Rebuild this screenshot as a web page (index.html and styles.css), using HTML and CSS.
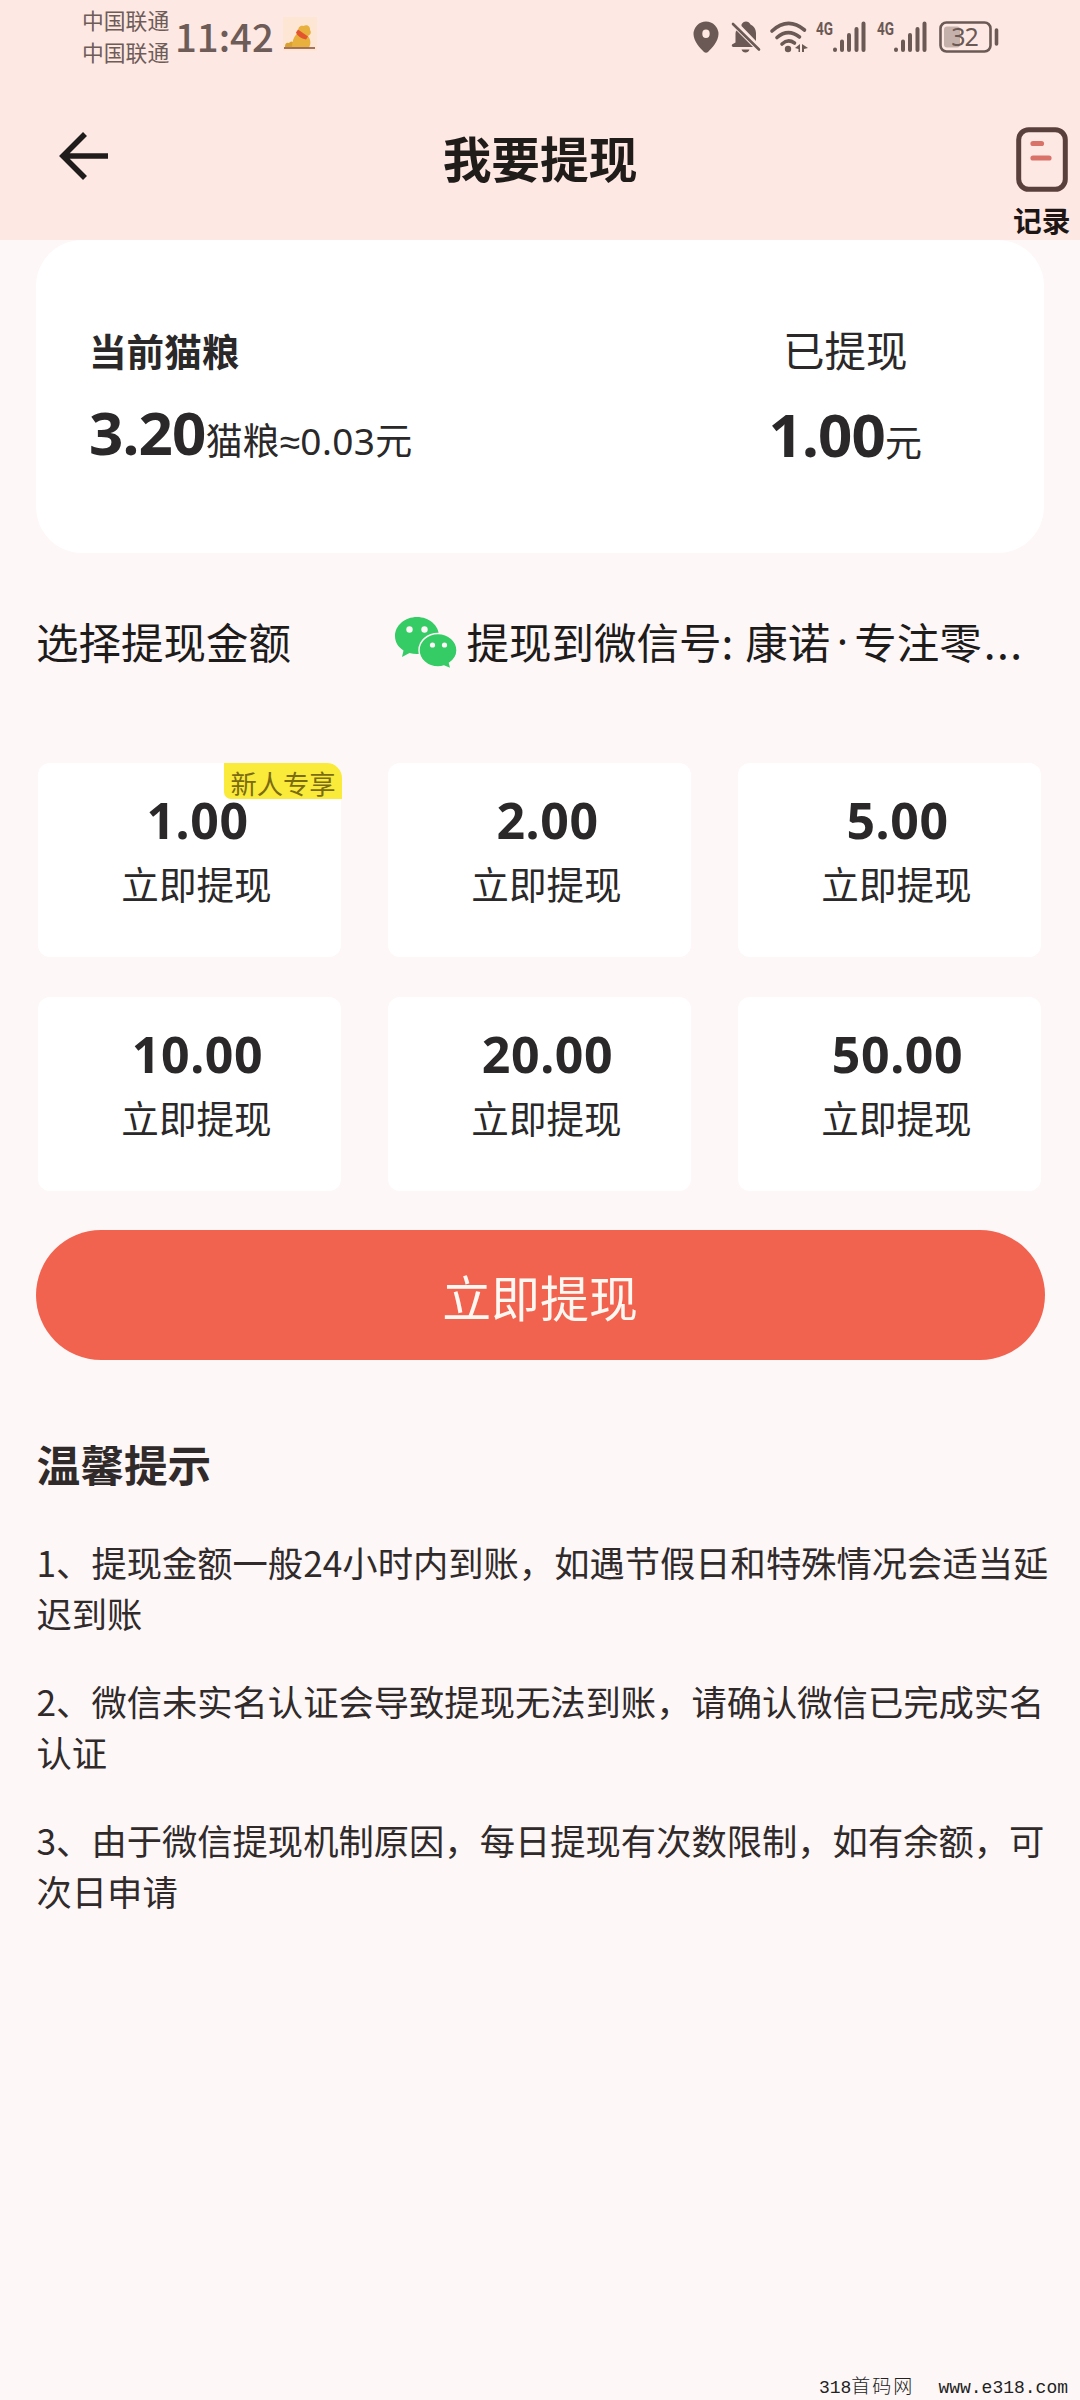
FILE: index.html
```html
<!DOCTYPE html>
<html lang="zh-CN">
<head>
<meta charset="utf-8">
<title>我要提现</title>
<link rel="stylesheet" href="styles.css">
</head>
<body>
<div class="page">
  <header class="header">
    <div class="status">
      <div class="carriers"><span>中国联通</span><span>中国联通</span></div>
      <span class="clock">11:42</span>
      <svg class="app-thumb" width="34" height="34" viewBox="0 0 34 34">
        <rect width="34" height="34" fill="#fde6d4"/>
        <path d="M2 30q0-5 4-4 2-3 5 0l1 4z" fill="#d9a12e"/>
        <path d="M9 30.500C9 23 12 18 15.500 15c-1-5 2-7 5-6 3-2 7 0 6.500 4 2 3 0 5-2 6 3 4 3 8 1 11.500z" fill="#e8b03c"/>
        <path d="M15 12.500l10 7-2 3c-5-1-9-4-10-7z" fill="#e2552e"/>
        <path d="M1 31h31" stroke="#8f5540" stroke-width="1.600"/>
      </svg>
      <div class="status-icons">
        <svg class="pin" width="26" height="32" viewBox="0 0 26 32"><path fill-rule="evenodd" d="M13 0.5A12.5 12.5 0 0 0 .5 13C.5 20 7 27 11 31q2 1.600 4 0C19 27 25.500 20 25.500 13A12.500 12.500 0 0 0 13 .5zM13 8.500a3.700 4.200 0 1 1 0 8.400a3.700 4.200 0 1 1 0-8.400z"/></svg>
        <svg class="bell" width="30" height="32" viewBox="0 0 30 32">
          <path d="M10.500 3.500C11.500 1.500 13 .5 15 .5s3.500 1 4.500 3c3.500 1.500 5.500 5 5.500 9v7.500L10.500 5zM5.500 9.500L22 26H2q-2-1-1-2.500l3.500-2v-9q0-2 1-3zM10.500 28.500h8q-1 3-4 3t-4-3z"/>
          <path class="line" d="M2 3L28 28.500" stroke-width="2.600"/>
        </svg>
        <svg class="wifi" width="38" height="32" viewBox="0 0 38 32">
          <g class="line" stroke-width="3.600"><path d="M2 10Q18 -4.500 34.500 9"/><path d="M7 16.500Q18 7 29.500 16"/><path d="M12 23Q18 17.500 24.500 22"/></g>
          <circle cx="18" cy="28" r="3.200"/><path d="M25 27l5-4v8h-1.500v-3zM32 23l6 4-4 1v3h-2z"/>
        </svg>
        <svg class="signal" width="50" height="32" viewBox="0 0 50 32">
          <text class="net" x="0" y="14" textLength="17" lengthAdjust="spacingAndGlyphs">4G</text>
          <g class="line" stroke-width="4"><path d="M19 28.500v.5M26 20.500v8.500M33 14v15M40.500 8v21M47.500 2.500v26.500"/></g>
        </svg>
        <svg class="signal second" width="50" height="32" viewBox="0 0 50 32">
          <text class="net" x="0" y="14" textLength="17" lengthAdjust="spacingAndGlyphs">4G</text>
          <g class="line" stroke-width="4"><path d="M19 28.500v.5M26 20.500v8.500M33 14v15M40.500 8v21M47.500 2.500v26.500"/></g>
        </svg>
        <svg class="battery" width="60" height="32" viewBox="0 0 60 32">
          <rect x="1.500" y="1.500" width="50" height="29" rx="6" class="line" stroke-width="2.600"/>
          <rect x="5" y="5.500" width="16" height="21" rx="3" fill="#c5b1ac"/>
          <path class="line" stroke-width="3.600" d="M57.500 9v14"/>
          <text class="level" x="25.500" y="25" text-anchor="middle">32</text>
        </svg>
      </div>
    </div>
    <nav class="nav">
      <svg class="back" width="50" height="50" viewBox="0 0 50 50" fill="none" stroke="#1f1c1b" stroke-width="5.600"><path d="M49 25H6M26 3L4 25l22 22"/></svg>
      <h1 class="title">我要提现</h1>
      <div class="record">
        <svg width="52" height="65" viewBox="0 0 52 65" fill="none">
          <rect x="2.700" y="2.700" width="46.600" height="59.600" rx="10" stroke="#5a403c" stroke-width="5"/>
          <path d="M17 16.500h8.500M17 31h16" stroke="#d9736a" stroke-width="5.200" stroke-linecap="round"/>
        </svg>
        <span>记录</span>
      </div>
    </nav>
  </header>

  <main class="main">
    <section class="balance">
      <div class="col">
        <div class="label strong">当前猫粮</div>
        <div class="value"><b>3.20</b><span>猫粮<span class="approx">≈0.03</span>元</span></div>
      </div>
      <div class="col paid">
        <div class="label">已提现</div>
        <div class="value"><b>1.00</b><span>元</span></div>
      </div>
    </section>

    <section class="account">
      <span class="choose">选择提现金额</span>
      <svg class="wechat" width="62" height="52" viewBox="0 0 62 52">
        <path d="M22 0C10 0 0 8.500 0 19c0 6 3 11 8.500 14.500L7 40l7.500-4q3.500 1 7.500 1c12 0 22-7.500 22-18S34 0 22 0z" fill="#35cc66"/>
        <circle cx="14.500" cy="12.500" r="3.200" fill="#fdf7f7"/><circle cx="29.500" cy="12.500" r="3.200" fill="#fdf7f7"/>
        <path d="M43 16.500c-10.500 0-19 7.500-19 16.700S32.500 50 43 50q3.500 0 6-1l7 3-1.500-6C59 43 62 38.500 62 33.200 62 24 53.500 16.500 43 16.500z" fill="#35cc66" stroke="#fdf7f7" stroke-width="1.400"/>
        <circle cx="37.500" cy="28" r="2.600" fill="#fdf7f7"/><circle cx="49.500" cy="28" r="2.600" fill="#fdf7f7"/>
      </svg>
      <span class="target"><span>提现到微信号:</span><span class="nick">康诺</span><span class="dot">·</span><span>专注零</span><span class="more">...</span></span>
    </section>

    <section class="amounts">
      <div class="amount"><b>1.00</b><span>立即提现</span><em class="badge">新人专享</em></div>
      <div class="amount"><b>2.00</b><span>立即提现</span></div>
      <div class="amount"><b>5.00</b><span>立即提现</span></div>
      <div class="amount"><b>10.00</b><span>立即提现</span></div>
      <div class="amount"><b>20.00</b><span>立即提现</span></div>
      <div class="amount"><b>50.00</b><span>立即提现</span></div>
    </section>

    <button class="submit">立即提现</button>

    <section class="tips">
      <h2>温馨提示</h2>
      <p>1、提现金额一般24小时内到账，如遇节假日和特殊情况会适当延<br>迟到账</p>
      <p>2、微信未实名认证会导致提现无法到账，请确认微信已完成实名<br>认证</p>
      <p>3、由于微信提现机制原因，每日提现有次数限制，如有余额，可<br>次日申请</p>
    </section>
  </main>

  <footer class="footer"><span class="site">318<i>首码网</i></span><span>www.e318.com</span></footer>
</div>
</body>
</html>
```

FILE: styles.css
```css
* { box-sizing: border-box; }
body { margin: 0; }
.page {
  width: 1080px;
  height: 2400px;
  display: flex;
  flex-direction: column;
  background: #fdf7f7;
  color: #2a2828;
  font-family: "Noto Sans CJK SC", sans-serif;
  overflow: hidden;
  white-space: nowrap;
}
.header { height: 240px; background: #fee8e3; }

/* status bar */
.status { height: 80px; display: flex; align-items: flex-start; color: #6e5c58; padding-left: 82px; }
.carriers { display: flex; flex-direction: column; font-size: 21.8px; line-height: 31.5px; padding-top: 4px; width: 88px; }
.clock { font-size: 38.3px; line-height: 56px; margin: 8px 0 0 5px; width: 99px; font-weight: 500; }
.app-thumb { margin: 17px 0 0 9px; }
.status-icons { display: flex; margin: 20.5px 81px 0 auto; fill: #6a5955; }
.status-icons svg { overflow: visible; }
.line { fill: none; stroke: #6a5955; stroke-linecap: round; }
.bell { margin-left: 12px; }
.wifi { margin-left: 9px; }
.signal { margin-left: 8px; }
.second { margin-left: 11px; }
.battery { margin-left: 12px; }
.net { font: 700 19px Roboto, sans-serif; }
.level { font: 400 25px "Noto Sans", sans-serif; letter-spacing: -1px; }

/* navigation */
.nav { height: 160px; display: grid; grid-template-columns: 200px 1fr 200px; align-items: start; }
.back { margin: 51px 0 0 59px; }
.title { margin: 42px 0 0; text-align: center; font-size: 48.7px; line-height: 70px; font-weight: 700; color: #201c1a; }
.record { justify-self: end; display: flex; flex-direction: column; align-items: center; margin: 46.5px 9.5px 0 0; font-size: 28.8px; line-height: 34px; font-weight: 700; color: #1e1614; }
.record span { margin-top: 11px; }

.main { padding: 0 36px; }

/* balance */
.balance { height: 313px; background: #fff; border-radius: 46px; display: flex; justify-content: space-between; padding: 84px 122px 0 53px; }
.label { font-size: 41.5px; line-height: 50px; }
.strong { font-size: 37.6px; font-weight: 700; padding-top: 1px; height: 50px; }
.value { margin-top: 23px; line-height: 70px; font-size: 60px; display: flex; align-items: baseline; }
.value b { font-family: "Noto Sans", sans-serif; font-weight: 700; letter-spacing: -0.8px; }
.value span { font-size: 37px; line-height: 1; }
.value .approx { font-family: "Noto Sans", sans-serif; font-size: 37px; letter-spacing: 0.4px; }
.paid { text-align: center; }
.paid .value { margin-top: 25px; }

/* account row */
.account { display: flex; align-items: flex-start; margin-top: 57.5px; height: 60px; font-size: 42.5px; line-height: 60px; color: #1e1b1b; }
.choose { width: 358.5px; }
.wechat { margin-top: 6px; }
.target { display: flex; margin-left: 10px; }
.nick { margin-left: 12px; }
.dot { width: 24px; text-align: center; font-family: "Noto Sans", sans-serif; }
.more { margin-left: 2px; letter-spacing: 1.4px; }

/* amounts */
.amounts { display: grid; grid-template-columns: repeat(3, 303px); column-gap: 47px; row-gap: 40px; margin: 92.5px 0 0 2px; }
.amount { position: relative; height: 194px; background: #fff; border-radius: 12px; padding: 27px 0 0 14px; display: flex; flex-direction: column; align-items: center; }
.amount b { font-family: "Noto Sans", sans-serif; font-size: 50px; line-height: 60px; letter-spacing: 0.6px; padding-left: 2px; }
.amount span { font-size: 37.6px; line-height: 50px; margin-top: 8px; }
.badge { position: absolute; top: 0; right: -1px; width: 118px; height: 36px; border-radius: 0 15px 0 7px; background: #faea3a; color: #7b6c12; font-style: normal; font-size: 26.3px; line-height: 39px; text-align: center; }

.submit { display: block; width: 1009px; height: 130px; margin: 39px 0 0 -0.5px; padding: 1px 0 0; border: 0; border-radius: 65px; background: #f1634f; color: #fff8f2; font: 400 48.9px/70px "Noto Sans CJK SC", sans-serif; text-align: center; }

/* tips */
.tips { padding: 72.5px 0 0 0.5px; color: #302a2a; }
.tips h2 { margin: 0 0 43px; font-size: 43.7px; line-height: 60px; font-weight: 700; }
.tips p { margin: 0 0 37px; font-size: 35.3px; line-height: 51px; }

.footer { margin-top: auto; align-self: flex-end; display: flex; gap: 24px; padding-right: 12px; height: 24px; line-height: 24px; font-family: "Liberation Mono", "Noto Sans CJK SC", monospace; font-size: 18px; color: #222; }
.footer i { font-style: normal; font-size: 19px; font-weight: 300; letter-spacing: 2px; }
```
